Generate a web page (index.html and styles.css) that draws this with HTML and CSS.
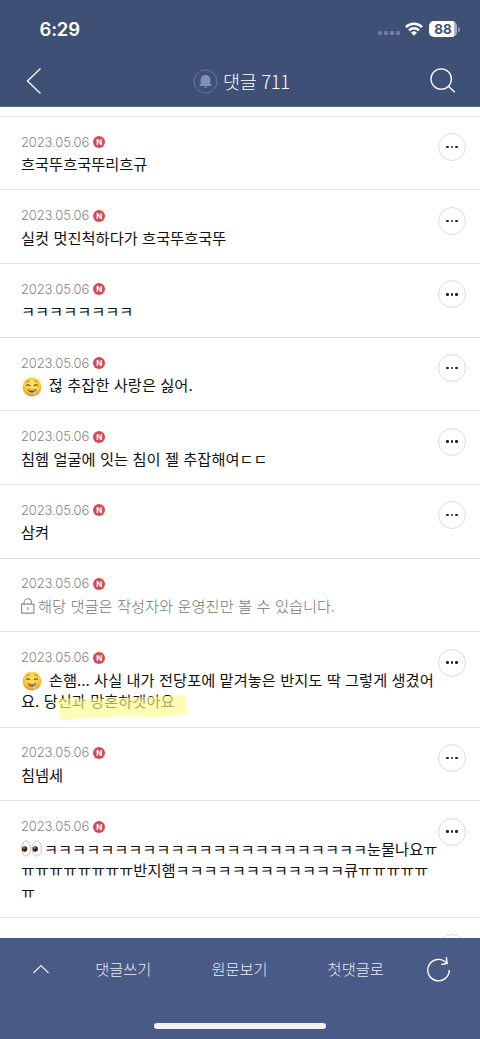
FILE: index.html
```html
<!DOCTYPE html>
<html lang="ko">
<head>
<meta charset="utf-8">
<title>댓글 711</title>
<link rel="stylesheet" href="styles.css">
</head>
<body>
<svg class="defs" aria-hidden="true">
  <defs>
    <radialGradient id="face" cx=".5" cy=".35" r=".65">
      <stop offset="0" stop-color="#ffe96b"/><stop offset=".65" stop-color="#fac83e"/><stop offset="1" stop-color="#dc9328"/>
    </radialGradient>
    <symbol id="drool" viewBox="0 0 20 20">
      <circle cx="10" cy="10" r="9.4" fill="url(#face)"/>
      <path d="M4.300 5.400q1.200-1.700 3-1.700M12.700 3.700q1.800 0 3 1.700" fill="none" stroke="#a8701f" stroke-width=".9" stroke-linecap="round"/>
      <path d="M4.600 8.300q1.600-1.300 3.300.3M12.100 8.600q1.700-1.600 3.300-.3" fill="none" stroke="#6b3e12" stroke-width="1.100" stroke-linecap="round"/>
      <path d="M5.800 12q4.200 1.200 8.400 0q-.7 3.600-4.200 3.600t-4.200-3.600z" fill="#7b4316"/>
      <path d="M7 12.900q3 .7 6 0" fill="none" stroke="#fff" stroke-width=".8"/>
      <path d="M11 15q2.200-1.200 2.400 1q1.600 2.800-.2 3.300q-2 .3-1.400-2.300z" fill="#a9cfdb"/>
    </symbol>
    <symbol id="eyes" viewBox="0 0 21 17">
      <g fill="#fbfbfb" stroke="#b9b9bb" stroke-width=".8"><ellipse cx="5.200" cy="8.500" rx="4.700" ry="7.600"/><ellipse cx="15.800" cy="8.500" rx="4.700" ry="7.600"/></g>
      <circle cx="3.600" cy="9" r="2.700" fill="#40200d"/><circle cx="14.200" cy="9" r="2.700" fill="#40200d"/>
      <circle cx="3" cy="8" r=".7" fill="#fff"/><circle cx="13.600" cy="8" r=".7" fill="#fff"/>
    </symbol>
  </defs>
</svg>
<div class="app">
  <header class="header">
    <div class="status">
      <span class="clock">6:29</span>
      <span class="signal"><i></i><i></i><i></i><i></i></span>
      <svg class="wifi" width="18" height="14" viewBox="0 0 18 14"><path fill="none" stroke="#fff" stroke-width="2.500" d="M.9 5.100a11.500 11.500 0 0 1 16.200 0M4 8.400a7.100 7.100 0 0 1 10 0"/><path fill="#fff" d="M9 13.700 6.100 10.800a4.100 4.100 0 0 1 5.800 0z"/></svg>
      <span class="battery">88</span><span class="battery-tip"></span>
    </div>
    <div class="nav">
      <svg class="back" width="16" height="28" viewBox="0 0 16 28"><path d="M14.500 1.500 1.500 14l13 12.500" fill="none" stroke="#fff" stroke-width="1.300"/></svg>
      <div class="title">
        <svg width="25" height="25" viewBox="0 0 25 25"><circle cx="12.500" cy="12.500" r="11.500" fill="none" stroke="#6878a0"/><path fill="#8591b0" d="M12.500 6c-3.400 0-4.800 2.300-4.800 5v3.800L6.500 16v1h12v-1l-1.200-1.200V11c0-2.700-1.400-5-4.800-5zM10.700 17.700h3.600a1.800 1.300 0 0 1-3.600 0z"/></svg>
        <h1>댓글 711</h1>
      </div>
      <svg class="search" width="26" height="26" viewBox="0 0 26 26"><circle cx="11.200" cy="11" r="10.200" fill="none" stroke="#fff" stroke-width="1.300"/><path d="m18.300 18.300 6.500 6" stroke="#fff" stroke-width="1.400"/></svg>
    </div>
  </header>

  <main class="list">
    <article class="row">
      <div class="body"><div class="meta">2023.05.06<b>N</b></div><p>흐국뚜흐국뚜리흐규</p></div>
      <button class="more"><i></i><i></i><i></i></button>
    </article>
    <article class="row">
      <div class="body"><div class="meta">2023.05.06<b>N</b></div><p>실컷 멋진척하다가 흐국뚜흐국뚜</p></div>
      <button class="more"><i></i><i></i><i></i></button>
    </article>
    <article class="row">
      <div class="body"><div class="meta">2023.05.06<b>N</b></div><p>ㅋㅋㅋㅋㅋㅋㅋㅋ</p></div>
      <button class="more"><i></i><i></i><i></i></button>
    </article>
    <article class="row">
      <div class="body"><div class="meta">2023.05.06<b>N</b></div><p><svg class="drool"><use href="#drool"/></svg> 젆 추잡한 사랑은 싫어.</p></div>
      <button class="more"><i></i><i></i><i></i></button>
    </article>
    <article class="row">
      <div class="body"><div class="meta">2023.05.06<b>N</b></div><p>침헴 얼굴에 잇는 침이 젤 추잡해여ㄷㄷ</p></div>
      <button class="more"><i></i><i></i><i></i></button>
    </article>
    <article class="row">
      <div class="body"><div class="meta">2023.05.06<b>N</b></div><p>삼켜</p></div>
      <button class="more"><i></i><i></i><i></i></button>
    </article>
    <article class="row">
      <div class="body"><div class="meta">2023.05.06<b>N</b></div><p class="secret"><svg class="lock" viewBox="0 0 14 16"><path d="M.6 6.100h12.300v9H.6zM3 6V4.500a3.750 3.750 0 0 1 7.500 0V6M6.750 9v3" fill="none" stroke="#8c8c8c" stroke-width="1.100"/></svg>해당 댓글은 작성자와 운영진만 볼 수 있습니다.</p></div>
    </article>
    <article class="row">
      <div class="body"><div class="meta">2023.05.06<b>N</b></div><p><svg class="drool"><use href="#drool"/></svg> 손햄... 사실 내가 전당포에 맡겨놓은 반지도 딱 그렇게 생겼어<br>요. 당<span class="marked">신과 망혼하갯아요<svg class="marker" viewBox="0 0 130 28"><path d="M1 4Q30 5 60 4T129 1L130 20Q115 23 95 23Q45 21 4 26Q1 18 1 4z" fill="#fffa8c" fill-opacity=".64"/></svg></span></p></div>
      <button class="more"><i></i><i></i><i></i></button>
    </article>
    <article class="row">
      <div class="body"><div class="meta">2023.05.06<b>N</b></div><p>침넴세</p></div>
      <button class="more"><i></i><i></i><i></i></button>
    </article>
    <article class="row">
      <div class="body"><div class="meta">2023.05.06<b>N</b></div><p><svg class="eyes"><use href="#eyes"/></svg>ㅋㅋㅋㅋㅋㅋㅋㅋㅋㅋㅋㅋㅋㅋㅋㅋㅋㅋㅋㅋㅋㅋㅋ눈물나요ㅠ<br>ㅠㅠㅠㅠㅠㅠㅠㅠ반지햄ㅋㅋㅋㅋㅋㅋㅋㅋㅋㅋㅋㅋ큐ㅠㅠㅠㅠㅠ<br>ㅠ</p></div>
      <button class="more"><i></i><i></i><i></i></button>
    </article>
    <article class="row">
      <div class="body"></div>
      <button class="more"><i></i><i></i><i></i></button>
    </article>
  </main>

  <footer class="footer">
    <div class="actions">
      <svg class="up" width="18" height="10" viewBox="0 0 18 10"><path d="M1.500 9 9 1.500 16.500 9" fill="none" stroke="#e9ecf4" stroke-width="1.200"/></svg>
      <div class="links"><span>댓글쓰기</span><span>원문보기</span><span>첫댓글로</span></div>
      <svg class="reload" width="24" height="26" viewBox="0 0 24 26"><path d="M22.200 14A10.700 10.700 0 1 1 19.300 6.800M19.300 1.200l.8 6.300-5.800 1" fill="none" stroke="#fff" stroke-width="1.400"/></svg>
    </div>
    <div class="home"></div>
  </footer>
</div>
</body>
</html>
```
FILE: styles.css
```css
* { box-sizing: border-box; }
body { margin: 0; background: #fff; font-family: "Noto Sans CJK KR", sans-serif; }
.defs { position: absolute; width: 0; height: 0; }
.app { width: 480px; height: 1039px; display: flex; flex-direction: column; overflow: hidden; }

.header { height: 107px; flex: none; background: #3f5077; border-bottom: 1px solid #5b6c94; color: #fff; }
.status { height: 56px; display: flex; align-items: center; padding: 2px 20px 0 39.500px; }
.clock { flex: 1; font: 600 18.500px/24px Inter, sans-serif; letter-spacing: -.2px; }
.signal { display: flex; gap: 1.700px; margin: 8px 5px 0 0; }
.signal i { width: 4.200px; height: 4.200px; border-radius: 1.300px; background: #707d9e; }
.wifi { margin-right: 6px; }
.battery { width: 28px; height: 16px; border-radius: 5px; background: linear-gradient(90deg, #fff 25px, #a8b0c4 25px); color: #3f5077; font: 700 13.500px/16px Inter, sans-serif; text-align: center; }
.battery-tip { width: 2px; height: 5px; margin-left: 1px; border-radius: 0 2px 2px 0; background: #8c97b1; }
.nav { height: 50px; display: flex; align-items: center; padding: 0 24px 0 26px; }
.title { flex: 1; display: flex; align-items: center; justify-content: center; gap: 5px; padding-left: 11px; }
.title h1 { margin: 0; font-size: 18.500px; font-weight: 300; line-height: 26px; letter-spacing: -.35px; }

.list { flex: 1; min-height: 0; overflow: hidden; padding-top: 8.800px; }
.row { display: flex; align-items: flex-start; border-top: 1px solid #e4e4e4; padding: 16.300px 14px 14.700px 21px; }
.body { flex: 1; min-width: 0; white-space: nowrap; }
.meta { height: 20px; display: flex; align-items: center; gap: 4px; padding-bottom: 2px; font: 300 13px/17px Inter, sans-serif; letter-spacing: -.13px; color: #858585; }
.meta b { width: 12px; height: 12px; border-radius: 50%; background: #d9494d; color: #fff; font: 700 8px/12px Inter, sans-serif; text-align: center; }
.body p { margin: 0; font-size: 15.270px; line-height: 21.660px; word-spacing: .1px; color: #111; }
.body .secret { color: #757575; font-weight: 300; }
.drool { width: 20px; height: 20px; margin: -2px 2.500px -2px 1px; vertical-align: -3.500px; }
.eyes { width: 21px; height: 17px; margin-right: 2px; vertical-align: -2.500px; }
.lock { width: 14px; height: 16px; margin-right: 3px; vertical-align: -2px; }
.marked { position: relative; }
.marker { position: absolute; left: -.5px; top: 4.500px; width: 130px; height: 28px; }
.more { width: 28px; height: 28px; flex: none; display: flex; align-items: center; justify-content: center; gap: 2px; border: 1px solid #dcdcdc; border-radius: 50%; background: none; padding: 0; }
.more i { width: 2.400px; height: 2.400px; border-radius: 50%; background: #222; }

.footer { height: 101px; flex: none; background: #495a86; color: #e9ecf4; display: flex; flex-direction: column; align-items: center; justify-content: space-between; padding-bottom: 10px; }
.actions { width: 100%; height: 60px; display: flex; align-items: center; justify-content: space-between; padding: 2px 29px 0 32px; font-size: 15.270px; font-weight: 300; }
.links { display: flex; gap: 60px; padding-bottom: 3px; margin-left: 2px; }
.home { width: 172px; height: 6px; border-radius: 3px; background: #f3f2f1; }
```
